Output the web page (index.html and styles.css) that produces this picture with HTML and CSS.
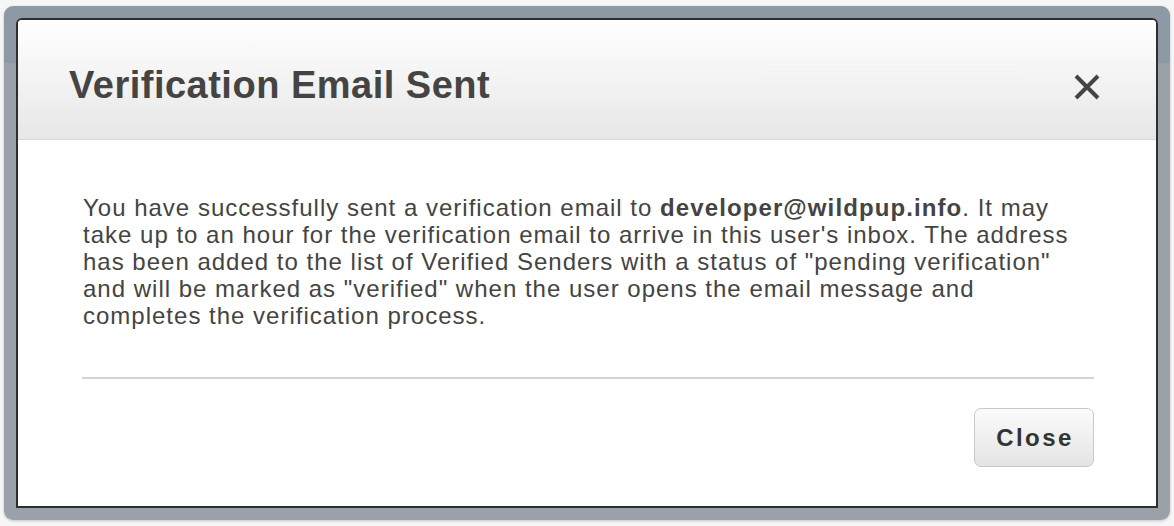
FILE: index.html
```html
<!DOCTYPE html>
<html lang="en">
<head>
  <meta charset="UTF-8" />
  <title>Verification Email Sent</title>
  <link rel="stylesheet" href="styles.css">
</head>
<body>
  <div class="backdrop">
    <div class="modal" role="dialog" aria-labelledby="modal-title">
      <div class="modal-header">
        <h2 class="modal-title" id="modal-title">Verification Email Sent</h2>
        <button class="modal-dismiss" aria-label="Close">
          <svg width="28" height="28" viewBox="0 0 28 28">
            <path d="M3 3 L25 25 M25 3 L3 25" />
          </svg>
        </button>
      </div>

      <div class="modal-body">
        <p class="modal-text">You have successfully sent a verification email to <strong>developer@wildpup.info</strong>. It may take up to an hour for the verification email to arrive in this user's inbox. The address has been added to the list of Verified Senders with a status of "pending verification" and will be marked as "verified" when the user opens the email message and completes the verification process.</p>
        <hr class="modal-rule">
        <div class="modal-actions">
          <button class="btn">Close</button>
        </div>
      </div>
    </div>
  </div>
</body>
</html>
```

FILE: styles.css
```css
/* Reset */
* {
  margin: 0;
  padding: 0;
  box-sizing: border-box;
}

body {
  font-family: 'Liberation Sans', Arial, sans-serif;
  background: #f6f6f6;
  color: #444;
}

/* Dimmed frame around the dialog */
.backdrop {
  margin: 6px 4px;
  height: 514px;
  padding: 12px;
  border-radius: 9px;
  background: linear-gradient(#8e99a6 0, #8e99a6 57px, #9ba1a9 57px);
  box-shadow: 0 1px 3px rgba(0,0,0,0.2);
  display: flex;
}

/* Dialog */
.modal {
  flex: 1;
  display: flex;
  flex-direction: column;
  background: #fff;
  border: 2px solid #2e2e2e;
  border-radius: 6px 6px 0 0;
}

.modal-header {
  height: 120px;
  padding: 10px 55px 0 51px;
  display: flex;
  align-items: center;
  justify-content: space-between;
  background: linear-gradient(#ffffff, #e7e7e7);
  border-bottom: 1px solid #d9d9d9;
  border-radius: 4px 4px 0 0;
}
.modal-title {
  font-size: 38px;
  font-weight: bold;
  letter-spacing: 0.5px;
  line-height: 44px;
  color: #444;
}
.modal-dismiss {
  margin-top: 4px;
  border: 0;
  background: none;
  display: flex;
}
.modal-dismiss path {
  stroke: #444;
  stroke-width: 4;
  fill: none;
}

.modal-body {
  flex: 1;
  padding: 54px 62px 0 64px;
}
.modal-text {
  margin-right: 18px;
  padding-left: 1px;
  font-size: 24px;
  line-height: 27px;
  letter-spacing: 1px;
  color: #444;
}
.modal-text strong {
  letter-spacing: 1.1px;
}
.modal-rule {
  border: 0;
  height: 2px;
  background: #d3d3d3;
  margin-top: 48px;
}

.modal-actions {
  display: flex;
  justify-content: flex-end;
  margin-top: 29px;
}
.btn {
  width: 120px;
  height: 59px;
  border: 1px solid #c9c9c9;
  border-radius: 7px;
  background: linear-gradient(#fbfbfb, #e4e4e4);
  font-family: 'Liberation Sans', Arial, sans-serif;
  font-size: 24px;
  font-weight: bold;
  letter-spacing: 2.4px;
  text-indent: 2px;
  color: #333;
}
```
